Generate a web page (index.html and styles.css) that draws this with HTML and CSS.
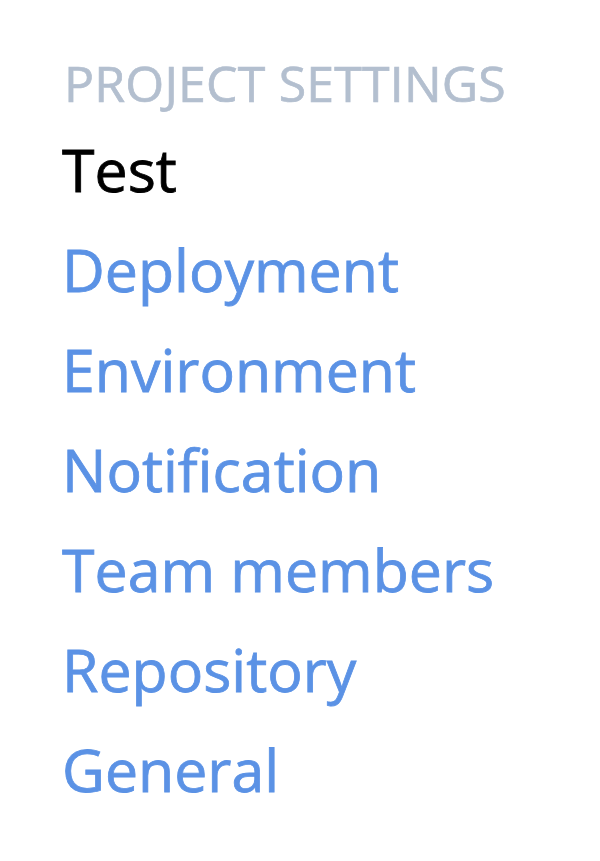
FILE: index.html
```html
<!DOCTYPE html>
<html>
<head>
<meta charset="utf-8">
<link rel="stylesheet" href="styles.css">
</head>
<body>
<nav class="sidebar">
  <div class="heading">PROJECT SETTINGS</div>
  <ul class="menu">
    <li class="item active">Test</li>
    <li class="item"><a href="#">Deployment</a></li>
    <li class="item"><a href="#">Environment</a></li>
    <li class="item"><a href="#">Notification</a></li>
    <li class="item"><a href="#">Team members</a></li>
    <li class="item"><a href="#">Repository</a></li>
    <li class="item"><a href="#">General</a></li>
  </ul>
</nav>
</body>
</html>
```
FILE: styles.css
```css
html, body {
  margin: 0;
  padding: 0;
  background: #ffffff;
}
body {
  font-family: "Open Sans", "DejaVu Sans", sans-serif;
}
.sidebar {
  padding: 53px 0 0 62px;
}
.heading {
  font-size: 50px;
  font-weight: 400;
  color: #b3bfcf;
  line-height: 60px;
  margin-left: 2px;
  letter-spacing: 0.2px;
  -webkit-text-stroke: 0.7px #b3bfcf;
}
.menu {
  list-style: none;
  margin: 6px 0 0;
  padding: 0;
}
.item {
  font-size: 59px;
  font-weight: 400;
  line-height: 100px;
}
.item.active {
  color: #000000;
  -webkit-text-stroke: 0.8px #000000;
}
.item a {
  color: #5b92e5;
  text-decoration: none;
  -webkit-text-stroke: 0.8px #5b92e5;
}
```
